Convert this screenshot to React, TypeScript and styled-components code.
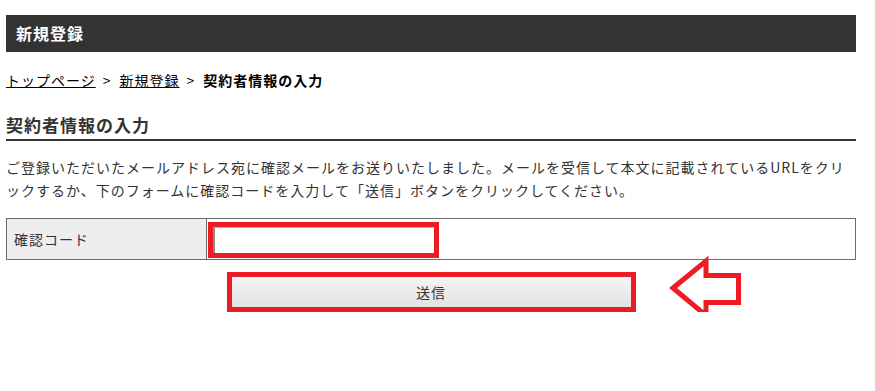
import React from 'react';
import styled, { createGlobalStyle } from 'styled-components';

const GlobalStyle = createGlobalStyle`
  body {
    margin: 0;
    background: #ffffff;
    font-family: "Noto Sans CJK JP", "Liberation Sans", sans-serif;
    color: #333333;
  }
`;

const Page = styled.div`
  padding: 15px 19px 0 6px;
  width: 850px;
`;

const TitleBar = styled.h1`
  margin: 0;
  height: 37px;
  line-height: 37px;
  padding-left: 10px;
  background-color: #333333;
  color: #ffffff;
  font-size: 16px;
  letter-spacing: 1px;
  font-weight: bold;
`;

const Breadcrumb = styled.nav`
  margin-top: 17px;
  line-height: 23px;
  font-size: 14px;
  letter-spacing: 1px;
  color: #000000;

  a {
    color: #000000;
    text-decoration: underline;
  }

  strong {
    font-weight: bold;
  }
`;

const Sep = styled.span`
  margin: 0 8px 0 7px;
`;

const Heading = styled.h2`
  margin: 21px 0 0;
  padding-bottom: 2px;
  line-height: 24px;
  font-size: 17px;
  letter-spacing: 1px;
  font-weight: bold;
  color: #333333;
  border-bottom: 2px solid #333333;
`;

const Lead = styled.p`
  margin: 15px 0 0;
  font-size: 14px;
  letter-spacing: 1px;
  line-height: 23px;
  color: #333333;
`;

const FormTable = styled.table`
  margin-top: 16px;
  width: 100%;
  border-collapse: collapse;
  border: 1px solid #6b6b6b;
`;

const Label = styled.th`
  width: 192px;
  padding: 0 0 0 7px;
  background-color: #eeeeee;
  border: 1px solid #6b6b6b;
  text-align: left;
  font-weight: normal;
  font-size: 14px;
  letter-spacing: 1px;
  color: #333333;
  vertical-align: middle;
`;

const Field = styled.td`
  padding: 3px 2px 1px 1px;
  border: 1px solid #6b6b6b;
`;

const Mark = styled.div<{ $w: number; $h: number }>`
  box-sizing: border-box;
  width: ${(p) => p.$w}px;
  height: ${(p) => p.$h}px;
  border: 5px solid #ed1c24;
  display: flex;
`;

const CodeInput = styled.input`
  flex: 1;
  min-width: 0;
  margin: 0;
  padding: 0 4px;
  border: 0;
  border-left: 2px solid #8a8a8a;
  border-top: 1px solid #b5b5b5;
  background: #ffffff;
  font-family: inherit;
  font-size: 14px;
  outline: none;
`;

const ButtonRow = styled.div`
  margin-top: 12px;
  display: flex;
  justify-content: center;
`;

const ButtonWrap = styled.div`
  position: relative;
`;

const SubmitButton = styled.button`
  flex: 1;
  margin: 0;
  border: 0;
  background: linear-gradient(#f5f5f5, #e2e2e2);
  font-family: inherit;
  font-size: 14px;
  letter-spacing: 1px;
  color: #333333;
  cursor: pointer;
`;

const Arrow = styled.svg`
  position: absolute;
  left: calc(100% + 31px);
  top: -17px;
`;

const App: React.FC = () => {
  return (
    <>
      <GlobalStyle />
      <Page>
        <TitleBar>新規登録</TitleBar>
        <Breadcrumb>
          <a href="#">トップページ</a>
          <Sep>&gt;</Sep>
          <a href="#">新規登録</a>
          <Sep>&gt;</Sep>
          <strong>契約者情報の入力</strong>
        </Breadcrumb>
        <Heading>契約者情報の入力</Heading>
        <Lead>
          ご登録いただいたメールアドレス宛に確認メールをお送りいたしました。メールを受信して本文に記載されているURLをクリックするか、下のフォームに確認コードを入力して「送信」ボタンをクリックしてください。
        </Lead>
        <FormTable>
          <tbody>
            <tr>
              <Label>確認コード</Label>
              <Field>
                <Mark $w={231} $h={36}>
                  <CodeInput type="text" />
                </Mark>
              </Field>
            </tr>
          </tbody>
        </FormTable>
        <ButtonRow>
          <ButtonWrap>
            <Mark $w={409} $h={40}>
              <SubmitButton type="button">送信</SubmitButton>
            </Mark>
            <Arrow width="77" height="66" viewBox="0 0 77 66">
              <polygon
                points="6,33 39,6 39,20.5 71.5,20.5 71.5,47.5 39,47.5 39,60.5"
                fill="none"
                stroke="#ed1c24"
                strokeWidth="5"
                strokeLinejoin="miter"
              />
            </Arrow>
          </ButtonWrap>
        </ButtonRow>
      </Page>
    </>
  );
};

export default App;
